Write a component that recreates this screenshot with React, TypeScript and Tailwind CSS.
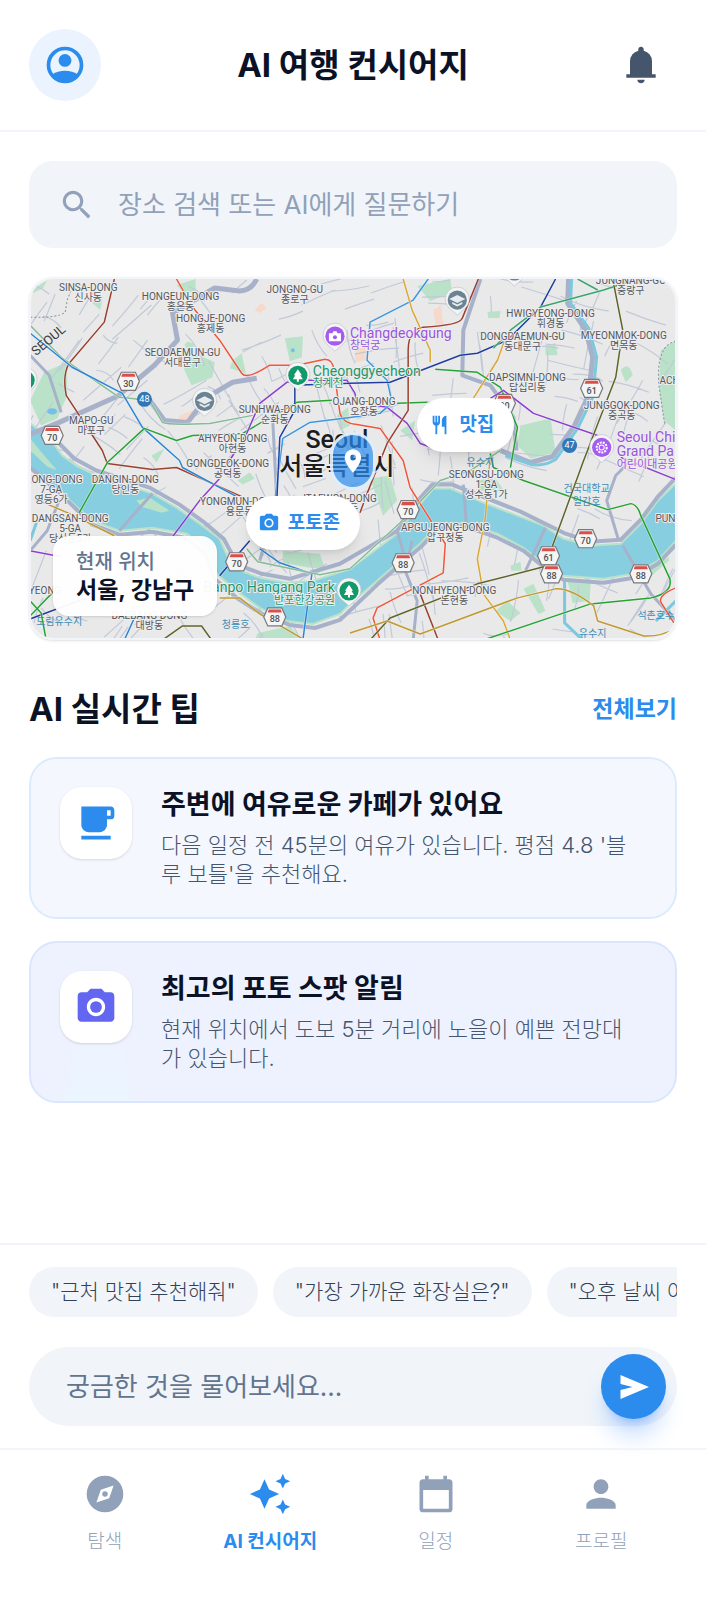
import type { ReactNode } from "react";
import {
  MdAutoAwesome,
  MdLocalCafe,
  MdLocationOn,
  MdPerson,
  MdPhotoCamera,
  MdSearch,
} from "react-icons/md";

type MapLabel = { x: number; y: number; lines: string[] };

const districts: MapLabel[] = [
  { x: 89, y: 291, lines: ["SINSA-DONG", "신사동"] },
  { x: 181, y: 300, lines: ["HONGEUN-DONG", "홍은동"] },
  { x: 211, y: 322, lines: ["HONGJE-DONG", "홍제동"] },
  { x: 295, y: 293, lines: ["JONGNO-GU", "종로구"] },
  { x: 183, y: 356, lines: ["SEODAEMUN-GU", "서대문구"] },
  { x: 92, y: 424, lines: ["MAPO-GU", "마포구"] },
  { x: 275, y: 413, lines: ["SUNHWA-DONG", "순화동"] },
  { x: 233, y: 442, lines: ["AHYEON-DONG", "아현동"] },
  { x: 228, y: 466, lines: ["GONGDEOK-DONG", "공덕동"] },
  { x: 364, y: 405, lines: ["OJANG-DONG", "오장동"] },
  { x: 126, y: 482, lines: ["DANGIN-DONG", "당인동"] },
  { x: 52, y: 482, lines: ["YEONG-DONG", "7-GA", "영등6가"] },
  { x: 71, y: 521, lines: ["DANGSAN-DONG", "5-GA", "당산동5가"] },
  { x: 240, y: 504, lines: ["YONGMUN-DONG", "용문동"] },
  { x: 340, y: 501, lines: ["ITAEWON-DONG", "이태원동"] },
  { x: 630, y: 284, lines: ["JUNGNANG-GU", "중랑구"] },
  { x: 550, y: 317, lines: ["HWIGYEONG-DONG", "휘경동"] },
  { x: 522, y: 340, lines: ["DONGDAEMUN-GU", "동대문구"] },
  { x: 623, y: 339, lines: ["MYEONMOK-DONG", "면목동"] },
  { x: 527, y: 381, lines: ["DAPSIMNI-DONG", "답십리동"] },
  { x: 621, y: 409, lines: ["JUNGGOK-DONG", "중곡동"] },
  { x: 672, y: 384, lines: ["ACHA"] },
  { x: 486, y: 477, lines: ["SEONGSU-DONG", "1-GA", "성수동1가"] },
  { x: 445, y: 530, lines: ["APGUJEONG-DONG", "압구정동"] },
  { x: 454, y: 593, lines: ["NONHYEON-DONG", "논현동"] },
  { x: 668, y: 521, lines: ["PUNG"] },
  { x: 150, y: 618, lines: ["DAEBANG-DONG", "대방동"] },
  { x: 46, y: 593, lines: ["YEONG"] },
];

const waterLabels: MapLabel[] = [
  { x: 60, y: 624, lines: ["도림유수지"] },
  { x: 236, y: 627, lines: ["청룡호"] },
  { x: 480, y: 465, lines: ["유수지"] },
  { x: 586, y: 491, lines: ["건국대학교", "일감호"] },
  { x: 592, y: 636, lines: ["유수지"] },
  { x: 655, y: 618, lines: ["석촌호수"] },
];

const shields: [number, number, string][] = [
  [129, 381, "30"],
  [53, 435, "70"],
  [237, 561, "70"],
  [275, 616, "88"],
  [408, 509, "70"],
  [403, 562, "88"],
  [591, 388, "61"],
  [504, 403, "30"],
  [585, 538, "70"],
  [548, 555, "61"],
  [551, 573, "88"],
  [640, 573, "88"],
];

const metroLines: [string, string][] = [
  ["#9a4030", "M115 279L105 322L70 363Q63 375 67 395L103 450L108 463L153 469L177 467L242 496"],
  ["#86bb98", "M31 325L63 358L120 397L150 400L163 422Q168 425 210 423L253 415"],
  ["#2a86d6", "M31 333L73 367L123 393L143 427L180 460L183 467L237 496"],
  ["#27a336", "M80 512L108 462L145 428L177 440L193 435L243 433L265 420L280 412L297 402L332 400M397 403L427 402"],
  ["#8a3fd0", "M173 536L200 500L220 478L230 460L247 433L260 403L287 382L303 380L347 380L355 393L357 405M375 405L387 407L407 423L420 443L440 450"],
  ["#f0563a", "M177 279L193 307L220 340L242 373Q247 380 270 365L297 365L325 359Q333 359 334 370L340 413Q343 423 357 424L380 428L403 460L410 487L445 543L443 572L377 607L373 617L380 639"],
  ["#3a97e0", "M428 279L413 300L370 322L367 360L387 380L392 402L380 413L350 417L310 422L283 438L275 500"],
  ["#1e3f9e", "M277 500L280 437L295 410L295 385L350 383L390 382L460 355L477 353L507 340L540 307L555 279M220 575L250 540M31 618L87 597"],
  ["#9a4030", "M478 279L462 318Q460 325 423 327Q408 330 408 350L408 410L387 443L367 493L360 512M420 593L438 639"],
  ["#dca835", "M403 279L412 310L430 350L430 362M505 338L497 360L473 398M490 453L485 517L477 558L483 593L503 620L510 639"],
  ["#27a336", "M435 369L477 372L500 387L517 427L510 467M490 453L493 467L523 480L607 509L630 503Q637 504 640 515L669 578Q672 592 650 597L590 603L483 639"],
  ["#3aa570", "M493 348L510 330L540 307L603 290L627 282M577 279L597 290"],
  ["#8a3fd0", "M490 398L503 390L533 413L597 435M620 457L675 479M31 550L62 556"],
  ["#5f6428", "M612 279L622 330L615 377L583 460L552 545L547 565L477 583L390 617L370 639M163 639L183 625L202 625L212 639"],
  ["#c09a30", "M350 632L387 620L420 633L517 597L555 588Q570 587 593 605L597 620L643 635Q660 636 675 627M220 597L240 597L260 613L305 639M40 500L75 515L115 535"],
  ["#f0563a", "M675 587Q655 595 661 603L673 622"],
  ["#2a86d6", "M260 548L280 562L312 573L303 639M135 617L125 639"],
  ["#27a336", "M31 600L42 612L47 639M31 615L55 590"],
  ["#86bb98", "M247 548L258 561L320 574L350 568L400 522L440 480L470 470L500 450"],
];

const highways: [number, string][] = [
  [5, "M257 279Q252 290 240 291L215 288L173 313L178 340L155 365L118 396L60 422L31 434"],
  [5, "M148 397L165 420L188 422L207 397L233 382L257 378"],
  [4, "M480 279L463 330L462 375L490 385L513 417L516 450"],
  [5, "M568 279L567 303L585 330L592 357L588 395L574 425L552 456L530 462L500 450"],
  [4, "M31 467L63 495L93 524L120 534L153 531L185 537L205 552L215 578L237 597L262 613L290 624L315 627L340 619L377 584L402 562L422 545L438 528L463 525"],
  [3, "M412 540L405 570L417 600L413 639"],
  [4, "M463 525L497 537L523 550L543 566L563 579L603 582L633 577L657 563L675 544"],
  [4, "M50 433L75 458L97 470L150 487L180 504L205 522L224 538L238 564L262 573L290 578L340 563L397 530L415 503L432 484L452 484L520 511L565 533L590 541L620 539L640 519L657 496L675 477"],
  [3, "M463 484L466 523M618 540L606 500L615 475L627 463M622 545L650 593L675 620M545 527L525 570"],
  [3, "M273 420L277 500L260 560M62 412L50 375L31 355"],
  [3, "M60 500L48 530L31 550M397 530L405 558M153 493L120 530"],
];

const parks = [
  "M31 400L45 372L68 362L68 395L58 418L42 425Z",
  "M185 370Q180 355 200 355L215 362L213 377L192 385Z",
  "M285 338L303 336L302 357L290 361Z",
  "M233 360L242 353L246 373L230 368Z",
  "M520 425L550 418L555 452L530 458L517 445Z",
  "M660 350L675 340L675 430L663 420L658 385Z",
  "M620 370Q628 360 632 375L625 382Z",
  "M567 580L590 582L589 600L572 602Z",
  "M495 610L507 600L520 612L510 620Z",
  "M523 588L533 583L545 610L538 613Z",
  "M177 285L196 279L196 292L184 293Z",
  "M417 286L450 279L452 293L430 301Z",
  "M33 290L48 280L44 288L34 293Z",
  "M92 302L103 300L101 310Z",
  "M152 455L165 448L157 462Z",
  "M238 480L250 472L255 478L243 484Z",
  "M283 550L320 553L325 568L310 567L283 562Z",
  "M370 478L390 475L397 500L383 515Z",
  "M258 632L290 625L302 639L255 639Z",
  "M185 345Q188 338 195 345L190 352Z",
  "M545 345L555 343L557 355L545 355Z",
  "M487 312L500 311L499 318L488 318Z",
  "M340 440L355 430L362 446L350 452Z",
  "M400 430L415 420L412 440Z",
  "M378 500L386 498L385 510Z",
  "M337 415L348 407L350 425L340 430Z",
  "M552 535L575 540L570 544L553 540Z",
  "M640 576L668 556L668 560L645 580Z",
  "M475 480L495 478L505 492L480 490Z",
  "M510 565L520 561L521 570L511 570Z",
];

// Minor streets, laid out with a small deterministic generator
const streets = (() => {
  let seed = 11;
  const next = () => {
    seed = (seed * 16807) % 2147483647;
    return seed / 2147483647;
  };
  const parts: string[] = [];
  for (let i = 0; i < 300; i++) {
    const x = 25 + next() * 650;
    const y = 275 + next() * 365;
    const angle = 0.4 + Math.floor(next() * 2) * 1.55 + (next() - 0.5) * 0.35 + x / 400;
    const length = 16 + next() * 36;
    const bend = (next() - 0.5) * 8;
    const dx = Math.cos(angle) * length;
    const dy = Math.sin(angle) * length;
    parts.push(
      `M${x.toFixed(0)} ${y.toFixed(0)}q${(dx / 2 + bend).toFixed(0)} ${(dy / 2 - bend).toFixed(0)} ${dx.toFixed(0)} ${dy.toFixed(0)}`
    );
  }
  return parts.join("");
})();

const han =
  "M31 423L50 437L63 455L77 465L97 475L120 482L153 493L177 507L200 523L220 538L233 567L260 577L287 582L313 580L350 568L377 548L397 533L417 507L433 488L450 488L483 502L517 515L543 525L563 538L590 545L620 543L640 523L657 500L675 483L675 540L657 560L633 573L603 578L563 575L543 563L523 547L497 533L463 522L437 525L420 543L400 560L377 580L350 603L340 613L313 623L287 620L260 607L237 590L217 573L207 547L187 533L153 527L120 530L93 520L63 493L31 467Z";

function Pin({ x, y, color, children }: { x: number; y: number; color: string; children: ReactNode }) {
  return (
    <g transform={`translate(${x} ${y})`}>
      <path d="M0 15L-8 8A12 12 0 1 1 8 8Z" fill="#f4f4f4" stroke="#b9bdc4" strokeWidth="0.6" />
      <circle r="9.6" fill={color} />
      {children}
    </g>
  );
}

const Tree = () => <path d="M0 -6L4 0H2.500L5 4H1V6.500H-1V4H-5L-2.500 0H-4Z" fill="#fff" />;
const Cap = () => <path d="M0 -5L8 -1L0 3L-8 -1ZM-5 2L0 4.500L5 2V4L0 6.500L-5 4Z" fill="#e8ecef" />;

function SeoulMap() {
  return (
    <svg viewBox="31 279 644 358" preserveAspectRatio="xMidYMid slice" className="block h-full w-full" aria-hidden="true">
      <rect x="20" y="260" width="670" height="400" fill="#e9e9ea" />
      <g fill="#b9e2c8">
        {parks.map((d) => (
          <path key={d} d={d} />
        ))}
      </g>
      <path d="M255 310L262 303L267 308L260 313ZM180 415L196 409L190 419L178 421ZM355 350L365 345L366 360L355 362ZM433 310L441 305L443 325L436 327Z" fill="#f6d9cb" />
      <path d={streets} fill="none" stroke="#c2c9d7" strokeWidth="1.200" />
      <path d="M31 317Q60 318 66 312L68 300L72 290M675 341Q655 345 658 385L664 425" fill="none" stroke="#8d8f96" strokeDasharray="2 2" />
      <path d={han} fill="#87cee1" stroke="#b9e2c8" strokeWidth="2" />
      <path d="M137 500L150 497L170 510L162 512L142 506ZM31 438L45 455L58 470L48 466L31 450Z" fill="#b9e2c8" />
      {highways.map(([width, d]) => (
        <path key={d} d={d} fill="none" stroke="#a7b2ca" strokeWidth={width} strokeLinejoin="round" />
      ))}
      <path d="M571 279L570 303L588 328L596 357L592 397L577 428L555 459Q540 468 525 462L505 455M564 580L564 622L582 639M31 540L38 520M675 600L655 620" fill="none" stroke="#7cc8dd" strokeWidth="3" />
      <ellipse cx="53" cy="411" rx="5" ry="3" fill="#76bfe8" />
      <circle cx="293" cy="350" r="2" fill="#76bfe8" />

      {metroLines.map(([color, d]) => (
        <g key={d} fill="none" strokeLinejoin="round">
          <path d={d} stroke="#f5f5f5" strokeWidth="2.600" opacity="0.6" />
          <path d={d} stroke={color} strokeWidth="1.500" />
        </g>
      ))}

      {shields.map(([x, y, label]) => (
        <g key={`${x}-${y}`} transform={`translate(${x} ${y})`}>
          <path d="M-7 -9H7L11 0L7 9H-7L-11 0Z" fill="#f5f5f5" stroke="#77797d" strokeWidth="1.200" />
          <path d="M-6 -7.500H6L7 -4.500H-7Z" fill="#d9504b" />
          <text y="5.500" textAnchor="middle" fontSize="9" fontWeight="500" fill="#4d4f54" className="font-[Roboto]">
            {label}
          </text>
        </g>
      ))}
      {[
        [145, 399, "48"],
        [569, 445, "47"],
      ].map(([x, y, label]) => (
        <g key={label} transform={`translate(${x} ${y})`}>
          <circle r="7.500" fill="#2f78b8" />
          <text y="3" textAnchor="middle" fontSize="9" fill="#fff" className="font-[Roboto]">
            {label}
          </text>
        </g>
      ))}

      <g textAnchor="middle" fontSize="10" fill="#55575d" stroke="#ededee" strokeWidth="2" paintOrder="stroke" className="font-[Roboto,'Noto_Sans_CJK_KR',sans-serif]">
        {districts.map(({ x, y, lines }) =>
          lines.map((line, i) => (
            <text key={`${x}-${line}`} x={x} y={y + i * 10}>
              {line}
            </text>
          ))
        )}
      </g>
      <g textAnchor="middle" fontSize="10" fill="#3f8fb8" className="font-['Noto_Sans_CJK_KR',sans-serif]">
        {waterLabels.map(({ x, y, lines }) =>
          lines.map((line, i) => (
            <text key={`${x}-${line}`} x={x} y={y + i * 13}>
              {line}
            </text>
          ))
        )}
      </g>
      <text transform="translate(37 356) rotate(-40)" fontSize="13" fill="#3c3e44" className="font-[Roboto]">
        SEOUL
      </text>

      <Pin x={335} y={336} color="#a45cf0">
        <path d="M-6 -3H-2.500L-1.500 -5H1.500L2.500 -3H6V5H-6Z" fill="#fff" />
        <circle cy="1" r="2" fill="#a45cf0" />
      </Pin>
      <Pin x={298} y={375} color="#12996a">
        <Tree />
      </Pin>
      <Pin x={349} y={590} color="#12996a">
        <Tree />
      </Pin>
      <Pin x={26} y={380} color="#12996a">
        <Tree />
      </Pin>
      <Pin x={205} y={401} color="#6b8494">
        <Cap />
      </Pin>
      <Pin x={457} y={300} color="#6b8494">
        <Cap />
      </Pin>
      <Pin x={514} y={271} color="#6b8494">
        <Cap />
      </Pin>
      <Pin x={601} y={447} color="#a45cf0">
        <circle r="5" fill="none" stroke="#fff" strokeWidth="2" strokeDasharray="2 1" />
        <circle r="2.500" fill="none" stroke="#fff" strokeWidth="1" />
      </Pin>

      <g stroke="#ededee" strokeWidth="2" paintOrder="stroke" className="font-[Roboto,'Noto_Sans_CJK_KR',sans-serif]">
        <g fill="#9a55dd">
          <text x="350" y="338" fontSize="14">Changdeokgung</text>
          <text x="350" y="349" fontSize="11">창덕궁</text>
          <text x="616" y="442" fontSize="14">Seoul Chi</text>
          <text x="616" y="456" fontSize="14">Grand Pa</text>
          <text x="616" y="467" fontSize="11">어린이대공원</text>
        </g>
        <g fill="#23966b">
          <text x="313" y="376" fontSize="14">Cheonggyecheon</text>
          <text x="313" y="387" fontSize="11">청계천</text>
          <text x="335" y="591" fontSize="14" textAnchor="end">Banpo Hangang Park</text>
          <text x="335" y="603" fontSize="11" textAnchor="end">반포한강공원</text>
        </g>
      </g>
      <g fill="#1b1c20" fontWeight="500" stroke="#ededee" strokeWidth="2" paintOrder="stroke" textAnchor="middle" className="font-[Roboto,'Noto_Sans_CJK_KR',sans-serif]">
        <text x="337" y="448" fontSize="25">Seoul</text>
        <text x="337" y="474" fontSize="25">서울특별시</text>
      </g>
    </svg>
  );
}

function AccountIcon() {
  return (
    <svg viewBox="0 0 24 24" className="size-11" aria-hidden="true">
      <circle cx="12" cy="12" r="9" fill="none" stroke="currentColor" strokeWidth="2" />
      <circle cx="12" cy="9.500" r="3.500" fill="currentColor" />
      <path d="M5 17.200Q8 15.200 12 15.200T19 17.200A9.300 9.300 0 0 1 5 17.200Z" fill="currentColor" />
    </svg>
  );
}

function BellIcon() {
  return (
    <svg viewBox="0 0 24 24" fill="currentColor" className="size-11" aria-hidden="true">
      <path d="M4 19v-2h2v-7q0-2.075 1.250-3.687T10.500 4.200v-.7q0-.625.438-1.062T12 2t1.063.438T13.500 3.500v.7q2 .5 3.250 2.113T18 10v7h2v2zm8 3q-.825 0-1.412-.587T10 20h4q0 .825-.587 1.413T12 22" />
    </svg>
  );
}

function DiningIcon() {
  return (
    <svg viewBox="0 0 24 24" fill="currentColor" className="size-[22px]" aria-hidden="true">
      <path d="M7 22v-9.150q-1.275-.35-2.137-1.400T4 9V2h2v7h1V2h2v7h1V2h2v7q0 1.400-.862 2.450T9 12.850V22zm10 0v-8h-3V7q0-2.075 1.463-3.537T19 2v20z" />
    </svg>
  );
}

function CompassIcon() {
  return (
    <svg viewBox="0 0 24 24" fill="currentColor" className="size-11" aria-hidden="true">
      <path fillRule="evenodd" d="M12 2A10 10 0 1 1 12 22A10 10 0 1 1 12 2ZM7.300 16.700L14.300 14.300L16.700 7.300L9.700 9.700Z" />
      <circle cx="12" cy="12" r="1.500" />
    </svg>
  );
}

function CalendarIcon() {
  return (
    <svg viewBox="0 0 24 24" fill="currentColor" className="size-11" aria-hidden="true">
      <path fillRule="evenodd" d="M5 22Q3 22 3 20V6Q3 4 5 4H6V2H8V4H16V2H18V4H19Q21 4 21 6V20Q21 22 19 22ZM5 20H19V9.800H5Z" />
    </svg>
  );
}

function SendIcon() {
  return (
    <svg viewBox="0 0 24 24" fill="currentColor" className="size-9" aria-hidden="true">
      <path d="M3 20v-6l8-2-8-2V4l19 8z" />
    </svg>
  );
}

const tips = [
  {
    title: "주변에 여유로운 카페가 있어요",
    body: "다음 일정 전 45분의 여유가 있습니다. 평점 4.8 '블루 보틀'을 추천해요.",
    icon: <MdLocalCafe className="size-11 text-[#2b8cee]" />,
    card: "border-[#dcebfc] bg-[#f4f8fe]",
    beam: false,
  },
  {
    title: "최고의 포토 스팟 알림",
    body: "현재 위치에서 도보 5분 거리에 노을이 예쁜 전망대가 있습니다.",
    icon: <MdPhotoCamera className="size-11 text-[#6366f1]" />,
    card: "border-[#dbe6fe] bg-[#eef2ff]",
    beam: true,
  },
];

const suggestions = ['"근처 맛집 추천해줘"', '"가장 가까운 화장실은?"', '"오후 날씨 어때?"'];

const tabs = [
  { label: "탐색", icon: <CompassIcon />, active: false },
  { label: "AI 컨시어지", icon: <MdAutoAwesome className="size-11" />, active: true },
  { label: "일정", icon: <CalendarIcon />, active: false },
  { label: "프로필", icon: <MdPerson className="size-11" />, active: false },
];

export default function App() {
  return (
    <div className="flex min-h-screen flex-col bg-white font-[Inter,'Noto_Sans_CJK_KR',sans-serif] text-[#0b1226]">
      <header className="flex items-center justify-between border-b-2 border-slate-100 px-[29px] py-[29px]">
        <button type="button" aria-label="계정" className="flex size-[72px] items-center justify-center rounded-full bg-[#eaf3fe] text-[#2b8cee]">
          <AccountIcon />
        </button>
        <h1 className="text-[33px] leading-10 font-bold">AI 여행 컨시어지</h1>
        <button type="button" aria-label="알림" className="flex size-[72px] items-center justify-center rounded-full text-slate-600">
          <BellIcon />
        </button>
      </header>

      <main className="flex-1 px-[29px] pt-[29px] pb-10">
        <label className="flex h-[87px] items-center gap-[22px] rounded-3xl bg-slate-100 px-[29px] text-slate-400">
          <MdSearch className="size-[38px] shrink-0" />
          <input
            type="search"
            aria-label="장소 검색"
            placeholder="장소 검색 또는 AI에게 질문하기"
            className="min-w-0 flex-1 bg-transparent text-[26px] outline-none placeholder:text-slate-400"
          />
        </label>

        <section className="relative mt-[29px] h-[363px] overflow-hidden rounded-3xl border-2 border-slate-100 shadow-sm">
          <SeoulMap />
          <div className="absolute top-[153px] left-1/2 flex h-[58px] w-[46px] -translate-x-1/2 items-center justify-center rounded-full border-3 border-white/80 bg-[#2b8cee]/70 text-white">
            <MdLocationOn className="size-7" />
          </div>
          <div className="absolute top-[119px] left-[60%] flex h-[54px] items-center gap-2 rounded-full bg-white pr-5 pl-3 text-[19px] font-bold text-[#2b8cee] shadow-lg">
            <DiningIcon />
            맛집
          </div>
          <div className="absolute top-[217px] left-1/3 flex h-[54px] items-center gap-2 rounded-full bg-white pr-5 pl-3 text-[19px] font-bold text-[#2b8cee] shadow-lg">
            <MdPhotoCamera className="size-[22px]" />
            포토존
          </div>
          <div className="absolute bottom-[22px] left-[22px] rounded-2xl bg-white/95 px-[23px] py-3 shadow-sm">
            <p className="text-[20px] leading-7 font-medium text-slate-500">현재 위치</p>
            <p className="text-[23px] leading-7 font-bold">서울, 강남구</p>
          </div>
        </section>

        <section className="mt-[47px]">
          <div className="flex items-center justify-between">
            <h2 className="text-[33px] leading-[44px] font-bold">AI 실시간 팁</h2>
            <a href="#tips" className="text-[23px] font-bold text-[#2b8cee]">
              전체보기
            </a>
          </div>
          <div id="tips" className="mt-[26px] flex flex-col gap-[22px]">
            {tips.map((tip) => (
              <article key={tip.title} className={`relative flex gap-[29px] overflow-hidden rounded-[28px] border-2 px-[29px] py-7 ${tip.card}`}>
                {tip.beam && (
                  <div className="absolute bottom-0 left-[34px] h-14 w-[66px] bg-gradient-to-b from-[#eef3ff] to-[#eaf5fe] [clip-path:polygon(12%_0,88%_0,100%_100%,0_100%)]"></div>
                )}
                <div className="relative flex size-[72px] shrink-0 items-center justify-center rounded-[22px] bg-white shadow-sm">{tip.icon}</div>
                <div className="min-w-0 flex-1 pr-2">
                  <h3 className="text-[27px] leading-9 font-bold">{tip.title}</h3>
                  <p className="mt-2 text-[22px] leading-[29px] font-light break-all text-slate-600">{tip.body}</p>
                </div>
              </article>
            ))}
          </div>
        </section>
      </main>

      <section className="border-t-2 border-slate-100 px-[29px] py-[22px]">
        <div className="flex gap-[15px] overflow-hidden">
          {suggestions.map((text) => (
            <button key={text} type="button" className="h-[50px] shrink-0 rounded-full bg-slate-100 px-[22px] text-[21px] font-light whitespace-nowrap text-slate-700">
              {text}
            </button>
          ))}
        </div>
        <form className="mt-[30px] flex h-[79px] items-center rounded-full bg-slate-100 pr-[11px] pl-[37px]" onSubmit={(e) => e.preventDefault()}>
          <input
            type="text"
            aria-label="AI에게 질문"
            placeholder="궁금한 것을 물어보세요..."
            className="min-w-0 flex-1 bg-transparent text-[26px] outline-none placeholder:text-slate-500"
          />
          <button type="submit" aria-label="보내기" className="flex size-[65px] shrink-0 items-center justify-center rounded-full bg-[#2b8cee] text-white shadow-xl shadow-blue-500/30">
            <SendIcon />
          </button>
        </form>
      </section>

      <nav className="grid grid-cols-4 border-t-2 border-slate-100 px-[22px] pt-[22px] pb-11">
        {tabs.map(({ label, icon, active }) => (
          <a
            key={label}
            href="#"
            aria-current={active ? "page" : undefined}
            className={`flex flex-col items-center gap-3 text-[19px] leading-7 ${active ? "font-bold text-[#2b8cee]" : "font-light text-slate-400"}`}
          >
            {icon}
            {label}
          </a>
        ))}
      </nav>
    </div>
  );
}
